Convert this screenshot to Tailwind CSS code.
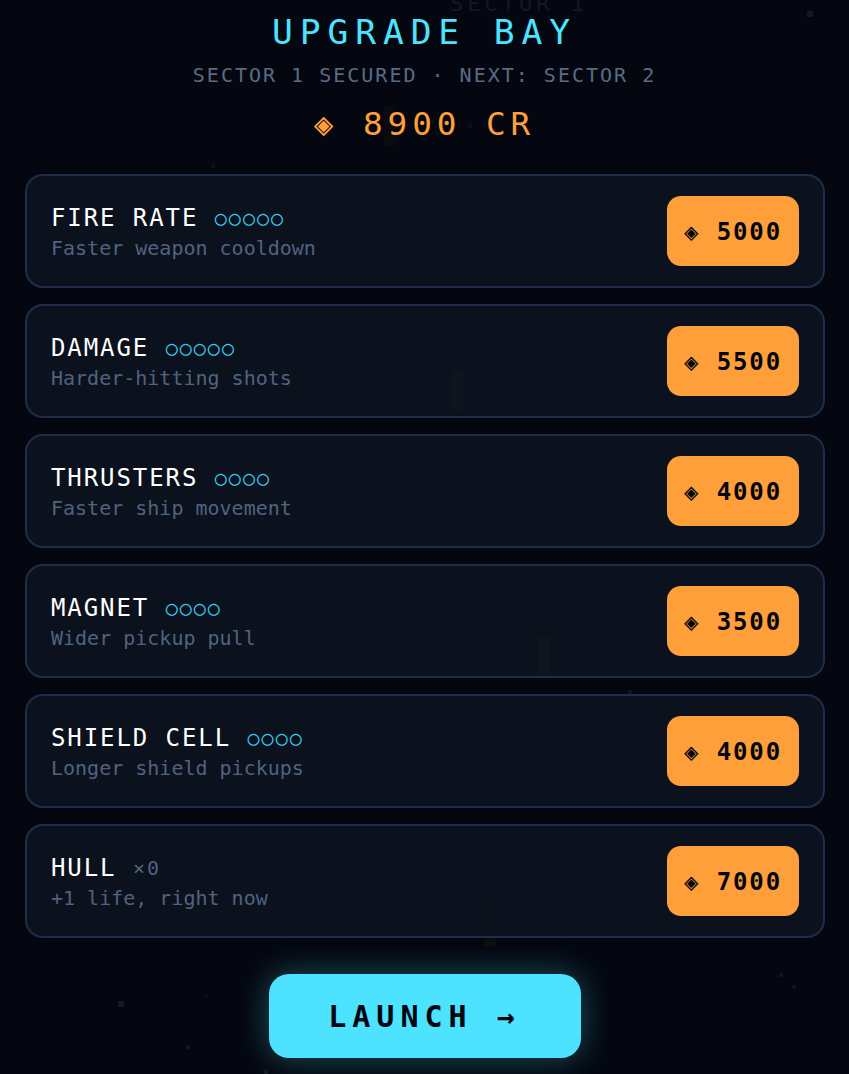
<!doctype html>
<html lang="en">
<head>
<meta charset="utf-8" />
<title>Upgrade Bay</title>
<script src="https://cdn.jsdelivr.net/npm/@tailwindcss/browser@4"></script>
</head>
<body class="bg-[#04070f]">
  <!-- Screen -->
  <div class="relative w-[849px] h-[1074px] overflow-hidden bg-[#04070f] font-['DejaVu_Sans_Mono',monospace]">

    <!-- Dimmed game behind the panel -->
    <div class="absolute left-[450px] top-[-8px] text-[22px] leading-[24px] tracking-[4px] text-[#111a24]">SECTOR 1</div>
    <div class="absolute left-[807px] top-[11px] w-[6px] h-[6px] bg-[#141821]"></div>
    <div class="absolute left-[211px] top-[164px] w-[4px] h-[4px] bg-[#0c1019]"></div>
    <div class="absolute left-[118px] top-[1001px] w-[6px] h-[6px] bg-[#141821]"></div>
    <div class="absolute left-[779px] top-[973px] w-[4px] h-[4px] bg-[#10141d]"></div>
    <div class="absolute left-[792px] top-[985px] w-[4px] h-[4px] bg-[#10141d]"></div>
    <div class="absolute left-[186px] top-[1045px] w-[4px] h-[4px] bg-[#10141d]"></div>
    <div class="absolute left-[204px] top-[994px] w-[3px] h-[3px] bg-[#0b0f18]"></div>
    <div class="absolute left-[264px] top-[1070px] w-[4px] h-[4px] bg-[#141821]"></div>
    <div class="absolute left-[628px] top-[690px] w-[4px] h-[4px] bg-[#10141d]"></div>
    <div class="absolute left-[468px] top-[124px] w-[4px] h-[4px] bg-[#0c1019]"></div>
    <div class="absolute left-[384px] top-[106px] w-[12px] h-[40px] bg-[#0b0b0f]"></div>
    <div class="absolute left-[452px] top-[372px] w-[12px] h-[38px] bg-[#13110f]"></div>
    <div class="absolute left-[538px] top-[638px] w-[12px] h-[38px] bg-[#13110f]"></div>
    <div class="absolute left-[484px] top-[900px] w-[12px] h-[46px] bg-[#0d0d0f]"></div>

    <!-- Panel -->
    <div class="relative flex flex-col items-center">
      <h1 class="mt-[12px] text-[34.6px] leading-[40px] tracking-[0.2em] font-normal text-[#4de3ff]">UPGRADE BAY</h1>
      <p class="mt-[11px] text-[20px] leading-[24px] tracking-[0.1em] text-[#5a6b85]">SECTOR 1 SECURED · NEXT: SECTOR 2</p>
      <p class="mt-[18px] text-[32.7px] leading-[38px] tracking-[0.15em] text-[#ff9f3a]">◈ 8900 CR</p>

      <!-- Upgrades -->
      <div class="mt-[31px] ml-px w-[800px] flex flex-col gap-4">
        <div class="h-[114px] flex items-center justify-between border-2 border-[#1e2e48] rounded-[18px] bg-[#0e1523]/70 px-6">
          <div class="pt-[2px]">
            <div class="text-[24px] leading-[28px] tracking-[0.08em] text-white">FIRE RATE<span class="inline-block -translate-y-px ml-[16.5px] text-[20px] tracking-[0.1em] text-[#34cfee]">○○○○○</span></div>
            <div class="mt-[3px] text-[20px] leading-[24px] text-[#50637f]">Faster weapon cooldown</div>
          </div>
          <div class="w-[132px] h-[70px] pt-[2px] flex items-center justify-center rounded-[14px] bg-[#ff9f3a] text-[24px] font-bold tracking-[0.08em] text-[#03060f]">◈ 5000</div>
        </div>

        <div class="h-[114px] flex items-center justify-between border-2 border-[#1e2e48] rounded-[18px] bg-[#0e1523]/70 px-6">
          <div class="pt-[2px]">
            <div class="text-[24px] leading-[28px] tracking-[0.08em] text-white">DAMAGE<span class="inline-block -translate-y-px ml-[16.5px] text-[20px] tracking-[0.1em] text-[#34cfee]">○○○○○</span></div>
            <div class="mt-[3px] text-[20px] leading-[24px] text-[#50637f]">Harder-hitting shots</div>
          </div>
          <div class="w-[132px] h-[70px] pt-[2px] flex items-center justify-center rounded-[14px] bg-[#ff9f3a] text-[24px] font-bold tracking-[0.08em] text-[#03060f]">◈ 5500</div>
        </div>

        <div class="h-[114px] flex items-center justify-between border-2 border-[#1e2e48] rounded-[18px] bg-[#0e1523]/70 px-6">
          <div class="pt-[2px]">
            <div class="text-[24px] leading-[28px] tracking-[0.08em] text-white">THRUSTERS<span class="inline-block -translate-y-px ml-[16.5px] text-[20px] tracking-[0.1em] text-[#34cfee]">○○○○</span></div>
            <div class="mt-[3px] text-[20px] leading-[24px] text-[#50637f]">Faster ship movement</div>
          </div>
          <div class="w-[132px] h-[70px] pt-[2px] flex items-center justify-center rounded-[14px] bg-[#ff9f3a] text-[24px] font-bold tracking-[0.08em] text-[#03060f]">◈ 4000</div>
        </div>

        <div class="h-[114px] flex items-center justify-between border-2 border-[#1e2e48] rounded-[18px] bg-[#0e1523]/70 px-6">
          <div class="pt-[2px]">
            <div class="text-[24px] leading-[28px] tracking-[0.08em] text-white">MAGNET<span class="inline-block -translate-y-px ml-[16.5px] text-[20px] tracking-[0.1em] text-[#34cfee]">○○○○</span></div>
            <div class="mt-[3px] text-[20px] leading-[24px] text-[#50637f]">Wider pickup pull</div>
          </div>
          <div class="w-[132px] h-[70px] pt-[2px] flex items-center justify-center rounded-[14px] bg-[#ff9f3a] text-[24px] font-bold tracking-[0.08em] text-[#03060f]">◈ 3500</div>
        </div>

        <div class="h-[114px] flex items-center justify-between border-2 border-[#1e2e48] rounded-[18px] bg-[#0e1523]/70 px-6">
          <div class="pt-[2px]">
            <div class="text-[24px] leading-[28px] tracking-[0.08em] text-white">SHIELD CELL<span class="inline-block -translate-y-px ml-[16.5px] text-[20px] tracking-[0.1em] text-[#34cfee]">○○○○</span></div>
            <div class="mt-[3px] text-[20px] leading-[24px] text-[#50637f]">Longer shield pickups</div>
          </div>
          <div class="w-[132px] h-[70px] pt-[2px] flex items-center justify-center rounded-[14px] bg-[#ff9f3a] text-[24px] font-bold tracking-[0.08em] text-[#03060f]">◈ 4000</div>
        </div>

        <div class="h-[114px] flex items-center justify-between border-2 border-[#1e2e48] rounded-[18px] bg-[#0e1523]/70 px-6">
          <div class="pt-[2px]">
            <div class="text-[24px] leading-[28px] tracking-[0.08em] text-white">HULL<span class="inline-block -translate-y-px ml-[16.5px] text-[20px] tracking-[0.1em] text-[#50637f]">×0</span></div>
            <div class="mt-[3px] text-[20px] leading-[24px] text-[#50637f]">+1 life, right now</div>
          </div>
          <div class="w-[132px] h-[70px] pt-[2px] flex items-center justify-center rounded-[14px] bg-[#ff9f3a] text-[24px] font-bold tracking-[0.08em] text-[#03060f]">◈ 7000</div>
        </div>
      </div>

      <!-- Launch -->
      <button class="mt-[36px] w-[312px] h-[84px] flex items-center justify-center rounded-[20px] bg-[#4de3ff] text-[30px] font-bold tracking-[0.2em] text-[#03060f] shadow-[0_0_32px_rgba(77,227,255,0.35)]">LAUNCH →</button>
    </div>
  </div>
</body>
</html>
